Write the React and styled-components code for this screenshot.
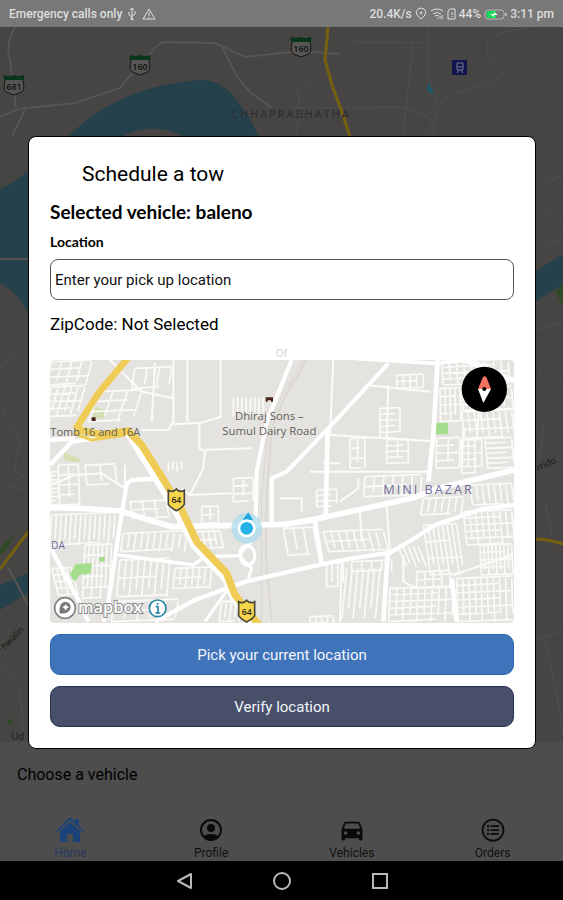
import React from 'react';
import styled, { createGlobalStyle } from 'styled-components';
import { MdDirectionsCar } from 'react-icons/md';
import { IoListCircleOutline } from 'react-icons/io5';

// parallel lanes inside a block: [x, y, width, height, columns, rows, skew]
const lanes = ([x, y, w, h, cols, rows, skew = 0]) => {
    let d = '';
    for (let i = 0; i <= cols; i++) {
        const px = x + (w * i) / (cols || 1);
        const cut = i % 2 ? h * 0.8 : h;
        if (cols) d += `M${px} ${y}L${px + skew * (cut / h)} ${y + cut}`;
    }
    for (let j = 0; j <= rows; j++) {
        const py = y + (h * j) / (rows || 1);
        const sx = (skew * j) / (rows || 1);
        if (rows) d += `M${x + sx} ${py}l${j % 2 ? w * 0.75 : w} ${-w * 0.04}`;
    }
    return d;
};

const westBlocks = [
    [20, 20, 120, 70, 4, 3, -18],
    [20, 95, 100, 90, 5, 4, -26],
    [160, 110, 130, 90, 3, 3, -30],
    [270, 40, 110, 60, 3, 1, -10],
    [40, 330, 60, 120, 2, 4, 4],
    [120, 330, 90, 60, 2, 1, 6],
    [18, 350, 22, 100, 1, 8, 0],
    [20, 480, 190, 90, 13, 1, -6],
    [120, 570, 80, 160, 6, 5, -8],
    [20, 640, 60, 80, 4, 4, 20],
    [235, 535, 210, 55, 11, 1, -8],
    [225, 615, 150, 110, 8, 2, -10],
    [390, 640, 110, 60, 6, 2, -6],
    [255, 440, 110, 50, 3, 2, 8],
    [455, 530, 70, 50, 4, 2, 10],
    [565, 125, 90, 60, 7, 0, 0],
    [565, 370, 60, 70, 2, 3, 0],
    [370, 320, 40, 30, 3, 0, 0],
    [470, 455, 50, 50, 2, 2, 0],
    [210, 740, 190, 60, 5, 2, -12],
    [530, 740, 60, 60, 4, 1, -8],
];

const eastBlocks = [
    [350, 60, 80, 40, 4, 2, 0],
    [485, 20, 200, 70, 9, 4, 4],
    [480, 100, 60, 100, 4, 4, 2],
    [545, 100, 150, 66, 6, 4, 4],
    [545, 170, 150, 80, 8, 3, 10],
    [470, 250, 70, 90, 2, 4, -2],
    [545, 255, 60, 100, 3, 5, 0],
    [615, 250, 80, 90, 1, 6, 8],
    [300, 160, 60, 90, 1, 5, 0],
    [320, 255, 65, 70, 2, 4, 0],
    [210, 250, 45, 90, 2, 3, 0],
    [255, 365, 170, 60, 6, 2, -4],
    [110, 405, 60, 50, 1, 3, 0],
    [430, 430, 120, 50, 6, 1, -8],
    [570, 390, 125, 60, 7, 1, 8],
    [130, 530, 180, 60, 8, 2, 16],
    [10, 520, 90, 80, 3, 1, 14],
    [355, 575, 60, 60, 4, 0, 24],
    [430, 510, 100, 150, 7, 3, 22],
    [550, 470, 145, 100, 8, 5, 10],
    [600, 570, 95, 90, 8, 4, 4],
    [140, 625, 50, 70, 3, 1, 0],
    [215, 620, 120, 30, 4, 1, 0],
    [200, 640, 100, 150, 6, 0, -14],
    [410, 650, 100, 50, 4, 2, 0],
    [330, 700, 190, 100, 9, 5, -4],
    [530, 670, 165, 130, 9, 6, 4],
    [90, 785, 70, 20, 4, 1, 0],
];

const GlobalStyle = createGlobalStyle`
    * {
        box-sizing: border-box;
    }

    body {
        margin: 0;
        background: #000;
        font-family: Roboto, "Liberation Sans", sans-serif;
    }

    button,
    input {
        font-family: inherit;
    }
`;

const Highway = ({ x, y }) => (
    <g transform={`translate(${x} ${y})`}>
        <path d="M-24-28Q-10-20 0-32Q10-20 24-28V14Q18 24 0 33Q-18 24-24 14Z" fill="#f5d64a" stroke="#4a483a" strokeWidth="5" />
        <MapText x="0" y="11" $size={26} $weight={600} textAnchor="middle" fill="#222">64</MapText>
    </g>
);

const Route = ({ x, y, label }) => (
    <g transform={`translate(${x} ${y})`}>
        <path d="M-10-9Q-5-7 0-9Q5-7 10-9L9-4Q12 7 5 8L0 10L-5 8Q-12 7-9-4Z" fill="#575654" stroke="#151515" strokeWidth="1" />
        <path d="M-10-10Q-5-8 0-10Q5-8 10-10V-5H-10Z" fill="#07351b" />
        <MapText x="0" y="5" $size={9} $weight={600} textAnchor="middle" fill="#111">{label}</MapText>
    </g>
);

const CityMap = () => (
    <Backdrop viewBox="0 27 563 715" preserveAspectRatio="xMidYMid slice" aria-hidden="true">
        <rect y="27" width="563" height="715" fill="#474543" />
        <path d="M0 189Q16 182 28 171Q60 145 68 137Q100 104 145 90Q180 80 205 80Q218 81 232 94L250 118L260 140L190 140Q155 117 115 140Q60 190 50 240L28 314Q18 292 0 283Z" fill="#24414c" />
        <path d="M0 585L28 573V593L0 610ZM533 273L563 254V284L533 303Z" fill="#24414c" />
        <path d="M428 82L433 91L433 95L427 90Z" fill="#1d5a66" />
        <path d="M555 292L563 284V305ZM0 548L12 536L10 544L0 556ZM7 722l5-4v7Z" fill="#2e4a25" />
        <g fill="none" stroke="#565553" strokeWidth="2">
            <path d="M15 27Q5 45 10 60L16 107M0 117L18 109L75 103L120 88L135 70L155 48L162 42L215 43L245 57L300 51L340 54" />
            <path d="M222 47L238 78L250 92L272 108M25 110L15 130L12 137M0 259H28M8 567L28 605" />
        </g>
        <g fill="none" stroke="#514f4e">
            <path d="M330 60L355 42L428 43M413 43L403 135M428 27V78L437 95L435 115L428 135M442 100L465 90L495 82L505 70L487 54V42L500 33L530 27" />
            <path d="M295 137L300 118L298 90L311 80L325 60M290 108L404 107L425 115L435 122M442 100L432 137" />
            <path d="M0 370L18 345L28 340M0 405L20 440L14 470L28 480M0 500L12 485L28 492M0 660L20 690L24 742M536 160H563M540 185L563 175M540 205L563 222M537 250L563 238M537 330L563 322M538 370L550 388L563 380M544 420L540 460M545 500L552 535M537 640L563 630M545 640L556 690L563 735M537 680H563" />
        </g>
        <path d="M328 27L325 60L332 85L342 112L351 140M0 569L28 532M535 539L548 540L563 544" fill="none" stroke="#75600f" strokeWidth="3" />
        <Route x={14} y={85} label="681" />
        <Route x={140} y={65} label="160" />
        <Route x={301} y={47} label="160" />
        <rect x="452" y="60" width="15" height="15" fill="#12154b" />
        <path d="M457 63H463V70H457ZM457 67H463M457 73L459 70M463 73L461 70" fill="none" stroke="#777991" />
        <MapText x="231" y="118" $size={11} $spacing={2} fill="#2a2932">CHHAPRABHATHA</MapText>
        <MapText x="0" y="0" $size={9} fill="#151515" transform="translate(5 650) rotate(-46)">hwalin</MapText>
        <MapText x="11" y="740" $size={10} fill="#1f1e22">Ud</MapText>
        <MapText x="0" y="0" $size={9} fill="#151515" transform="translate(538 471) rotate(-25)">rrido</MapText>
    </Backdrop>
);

const PickupMap = () => (
    <MapImage viewBox="15 15 1392 789" preserveAspectRatio="xMidYMid slice" role="img" aria-label="Pick up map">
        <rect x="0" y="0" width="1440" height="830" fill="#e5e3df" />
        <path d="M150 155L182 165L178 190L145 188ZM55 290L105 312L110 322L60 318Z" fill="#d3dfb0" />
        <g fill="none" stroke="#fbfaf7" strokeWidth="5">
            <path d={westBlocks.map(lanes).join('')} />
            <path transform="translate(705 0)" d={eastBlocks.map(lanes).join('')} />
        </g>
        <path d="M92 628L140 624L138 655L104 660L88 680L75 658ZM163 607l16-2v14l-16 2Z" fill="#a4de8d" />
        <path d="M1173 203H1209V238H1173Z" fill="#a4de8d" />
        <g fill="none" stroke="#fcfbf9" strokeWidth="6">
            <path d="M385 15V200L370 225H290M427 15V200M527 15V185L470 203L385 208M463 203V280L480 290L475 340L435 420L410 400M480 284L620 280M240 395V330M195 15L290 110L385 130M330 25L320 200M430 420L560 415M15 390L90 360L170 355L240 400" />
            <path transform="translate(705 0)" d="M160 15L150 240L450 258M90 350H450M255 90L450 110M325 90L320 250M0 430H65V470M180 325L130 325M235 370V400L180 440M320 450L330 590M240 470L245 560M185 620L180 800M370 600V680L410 700M520 660L695 600M550 220L545 350M610 20L590 250" />
        </g>
        <g fill="none" stroke="#d9d6cf">
            <path d="M785 15L722 120L680 220L665 420L662 600L680 800" strokeWidth="5" />
            <path d="M775 15L712 120L670 220L650 420L650 800" strokeWidth="3" />
        </g>
        <g fill="none" stroke="#fff" strokeLinejoin="round">
            <path d="M15 458L110 460L225 468L380 515L720 508L810 493L1100 430L1180 400L1407 345" strokeWidth="17" />
            <path d="M350 370L262 375Q245 380 243 400L228 490L190 740L175 800" strokeWidth="13" />
            <path d="M220 600L445 630L480 605L590 602" strokeWidth="10" />
            <path d="M15 255L90 250M15 330L80 260L160 250M15 575L100 735L130 800" strokeWidth="13" />
            <path d="M330 800L450 735L600 680L830 628L920 610L1035 593L1100 555L1170 510L1310 462L1407 450" strokeWidth="13" />
            <path d="M740 15L665 200L635 350L632 500M680 508V370L725 350L855 215L1030 25" strokeWidth="12" />
            <path d="M848 220L842 480M810 500L830 625M1178 15L1165 240L1150 380M1028 595L1015 800M1220 670L1235 800" strokeWidth="14" />
            <path d="M930 10L1170 25L1270 15L1407 75M1255 15L1407 80" strokeWidth="11" />
            <path d="M620 560L590 590Q580 620 605 632Q630 625 630 600Q625 570 600 573Q575 585 590 610L620 640L610 670M550 700L480 800" strokeWidth="9" />
            <path d="M250 230L380 440L455 575L545 670L570 730L625 800" strokeWidth="28" />
        </g>
        <g fill="none" stroke="#efcc55" strokeLinejoin="round">
            <path d="M252 5L160 115L92 222" strokeWidth="20" />
            <path d="M92 222L170 240L250 228L290 270L350 365L410 465L455 560L545 655L570 720L650 820" strokeWidth="22" />
            <path d="M85 235L140 255L240 240" strokeWidth="9" />
        </g>
        <Highway x={394} y={434} />
        <Highway x={605} y={768} />
        <path d="M140 187h12v11h-12ZM662 127h22v13h-6v-4h-10v4h-6Z" fill="#4b2618" />
        <MapText x="16" y="243" $size={33} fill="#625e5b">Tomb 16 and 16A</MapText>
        <MapText x="673" y="195" $size={34} textAnchor="middle" fill="#625e5b">Dhiraj Sons –</MapText>
        <MapText x="673" y="241" $size={34} textAnchor="middle" fill="#625e5b">Sumul Dairy Road</MapText>
        <MapText x="1015" y="417" $size={38} $spacing={6} fill="#6d6e9c">MINI BAZAR</MapText>
        <MapText x="18" y="581" $size={30} $spacing={1} fill="#6d6e9c">DA</MapText>
        <circle cx="605" cy="520" r="46" fill="#a9dcec" opacity="0.75" />
        <path d="M593 495L610 472L624 495Z" fill="#22a8dc" />
        <circle cx="605" cy="520" r="27" fill="#fff" />
        <circle cx="605" cy="520" r="19" fill="#24b1e6" />
        <circle cx="60" cy="759" r="31" fill="#fff" stroke="#858585" strokeWidth="5" />
        <path d="M44 775Q40 744 59 740Q78 741 77 758Q73 778 44 775Z" fill="#777" />
        <path d="M62 747l4 7 7 2-7 4-4 7-4-7-7-4 7-2Z" fill="#fff" />
        <MapText x="99" y="773" $size={49} $weight={600} fill="#fff" stroke="#8c8c8c" strokeWidth="6" paintOrder="stroke">mapbox</MapText>
        <circle cx="338" cy="760" r="25" fill="#fff" stroke="#2687a8" strokeWidth="5" />
        <path d="M332 755H339V773M331 774H346M338 744V749" fill="none" stroke="#2687a8" strokeWidth="5" />
        <circle cx="1318" cy="103" r="68" fill="#000" />
        <path d="M1299 102L1313 68Q1318 60 1325 68L1338 102Z" fill="#f27360" />
        <path d="M1299 102L1315 144L1338 102Z" fill="#fff" />
        <circle cx="1318" cy="102" r="6" fill="#000" />
    </MapImage>
);

const HomeIcon = () => (
    <svg width="28" height="28" viewBox="0 0 28 28">
        <path d="M14 1L19 6V3H23V10L28 15L27 16L14 4L1 16L0 15Z" fill="currentColor" />
        <path d="M14 6L24 15V26H17V18H11V26H4V15Z" fill="currentColor" />
    </svg>
);

const ProfileIcon = () => (
    <svg width="28" height="28" viewBox="0 0 28 28">
        <circle cx="14" cy="14" r="10" fill="none" stroke="currentColor" strokeWidth="2" />
        <circle cx="14" cy="12" r="4" fill="currentColor" />
        <path d="M7 20Q9 18 14 18Q19 18 21 20Q18 24 14 24Q10 24 7 20Z" fill="currentColor" />
    </svg>
);

const tabs = [
    { name: 'Home', icon: <HomeIcon />, active: true },
    { name: 'Profile', icon: <ProfileIcon /> },
    { name: 'Vehicles', icon: <MdDirectionsCar /> },
    { name: 'Orders', icon: <IoListCircleOutline /> },
];

const App = () => {
    return (
        <Screen>
            <GlobalStyle />
            <StatusBar>
                <StatusGroup>
                    <span>Emergency calls only</span>
                    <svg width="10" height="14" viewBox="0 0 10 14" fill="none" stroke="currentColor">
                        <path d="M5 1V12M2 5V8L5 10M8 4V7L5 9M3 3L5 1L7 3" />
                        <circle cx="5" cy="12" r="1" fill="currentColor" />
                    </svg>
                    <svg width="14" height="14" viewBox="0 0 14 14" fill="none" stroke="currentColor" strokeLinejoin="round">
                        <path d="M7 2L13 12H1ZM7 5V9M7 10V11" />
                    </svg>
                </StatusGroup>
                <StatusGroup $tight>
                    <span>20.4K/s</span>
                    <svg width="12" height="14" viewBox="0 0 12 14" fill="none" stroke="currentColor">
                        <path d="M6 12L2 8Q0 4 3 2Q6 0 9 2Q12 4 10 8Z" />
                        <circle cx="6" cy="6" r="1" />
                    </svg>
                    <svg width="14" height="14" viewBox="0 0 14 14" fill="none" stroke="currentColor">
                        <path d="M1 4Q7 0 13 4M3 7Q7 4 11 7M5 9Q7 8 9 9M7 11L8 12M10 9V12M12 8V12" />
                    </svg>
                    <svg width="9" height="14" viewBox="0 0 9 14" fill="none" stroke="currentColor">
                        <path d="M3 2H8V12H1V4ZM5 5V8M5 9V10" />
                    </svg>
                    <span>44%</span>
                    <svg width="23" height="14" viewBox="0 0 23 14">
                        <rect x="1" y="3" width="19" height="9" rx="3" fill="none" stroke="#b5b5b5" />
                        <path d="M3 4H12V11H3Q2 7 3 4Z" fill="#12dc57" />
                        <path d="M6 7H10V5L14 8H10V10Z" fill="#fff" />
                        <path d="M22 6V9" stroke="#b5b5b5" strokeWidth="2" />
                    </svg>
                    <span>3:11 pm</span>
                </StatusGroup>
            </StatusBar>

            <Content>
                <MapArea>
                    <CityMap />
                </MapArea>
                <VehiclePanel>Choose a vehicle</VehiclePanel>
                <TabBar>
                    {tabs.map((tab) => (
                        <Tab key={tab.name} href="#" $active={tab.active}>
                            {tab.icon}
                            <span>{tab.name}</span>
                        </Tab>
                    ))}
                </TabBar>

                <Overlay>
                    <Modal role="dialog" aria-labelledby="tow-title">
                        <Title id="tow-title">Schedule a tow</Title>
                        <Vehicle>Selected vehicle: baleno</Vehicle>
                        <Label htmlFor="pickup">Location</Label>
                        <LocationInput id="pickup" type="text" placeholder="Enter your pick up location" />
                        <ZipCode>ZipCode: Not Selected</ZipCode>
                        <Or>or</Or>
                        <PickupMap />
                        <ActionButton type="button" $bg="#3f73ba" $edge="#2867b0">Pick your current location</ActionButton>
                        <ActionButton type="button" $bg="#485069" $edge="#243153">Verify location</ActionButton>
                    </Modal>
                </Overlay>
            </Content>

            <SystemNav>
                <NavButton type="button" aria-label="Back">
                    <svg width="20" height="20" viewBox="0 0 20 20" fill="none" stroke="currentColor" strokeWidth="2" strokeLinejoin="round">
                        <path d="M17 3V17L4 10Z" />
                    </svg>
                </NavButton>
                <NavButton type="button" aria-label="Home screen">
                    <svg width="20" height="20" viewBox="0 0 20 20" fill="none" stroke="currentColor" strokeWidth="2">
                        <circle cx="10" cy="10" r="8" />
                    </svg>
                </NavButton>
                <NavButton type="button" aria-label="Recent apps">
                    <svg width="20" height="20" viewBox="0 0 20 20" fill="none" stroke="currentColor" strokeWidth="2">
                        <rect x="3" y="3" width="14" height="14" />
                    </svg>
                </NavButton>
            </SystemNav>
        </Screen>
    );
}

export default App;

const Screen = styled.div`
    min-height: 100vh;
    display: flex;
    flex-direction: column;
    color: #000;
`;

const StatusBar = styled.header`
    display: flex;
    align-items: center;
    justify-content: space-between;
    height: 27px;
    padding: 0 9px;
    background: #787878;
    color: #dedede;
    font-size: 12px;
    font-weight: 500;
    white-space: nowrap;
`;

const StatusGroup = styled.div`
    display: flex;
    align-items: center;
    gap: ${({ $tight }) => ($tight ? '3px' : '5px')};
`;

const Content = styled.main`
    position: relative;
    flex: 1;
    display: flex;
    flex-direction: column;
    background: #4d4d4d;
`;

const MapArea = styled.div`
    flex: 1;
    display: grid;
    min-height: 0;
    background: #474543;
`;

const Backdrop = styled.svg`
    width: 100%;
    height: 100%;
    display: block;
`;

const MapText = styled.text`
    font-family: "Open Sans", "Noto Sans", sans-serif;
    font-size: ${({ $size }) => $size}px;
    font-weight: ${({ $weight }) => $weight || 400};
    letter-spacing: ${({ $spacing }) => $spacing || 0}px;
`;

const VehiclePanel = styled.section`
    height: 63px;
    padding: 0 17px;
    font-size: 16px;
    line-height: 66px;
`;

const TabBar = styled.nav`
    display: grid;
    grid-template-columns: repeat(4, 1fr);
    height: 56px;
    border-top: 1px solid #494949;
`;

const Tab = styled.a`
    display: flex;
    flex-direction: column;
    align-items: center;
    color: ${({ $active }) => ($active ? '#1c427a' : '#0a0a0a')};
    text-decoration: none;
    font-size: 12px;
    line-height: 14px;

    svg {
        flex: none;
        margin-top: 10px;
        width: 28px;
        height: 28px;
    }

    span {
        margin-top: 2px;
        color: ${({ $active }) => ($active ? '#27395c' : '#111')};
    }
`;

const Overlay = styled.div`
    position: absolute;
    inset: 0;
    display: flex;
    align-items: center;
    padding: 0 27px 3px 28px;
`;

const Modal = styled.section`
    flex: 1;
    display: flex;
    flex-direction: column;
    padding: 24px 21px 21px;
    background: #fff;
    border: 1px solid #000;
    border-radius: 8px;
`;

const Title = styled.h1`
    margin: 0 0 12px 32px;
    font-size: 21px;
    font-weight: 400;
    line-height: 26px;
`;

const Vehicle = styled.h2`
    margin: 0;
    font-family: Lato, sans-serif;
    font-size: 19px;
    font-weight: 700;
    line-height: 26px;
`;

const Label = styled.label`
    margin-top: 8px;
    font-family: Lato, sans-serif;
    font-size: 14px;
    font-weight: 700;
    line-height: 18px;
`;

const LocationInput = styled.input`
    width: 100%;
    height: 41px;
    margin-top: 8px;
    padding: 0 4px;
    border: 1px solid #555;
    border-radius: 8px;
    background: #fff;
    font-size: 15px;

    &::placeholder {
        color: #111;
        opacity: 1;
    }
`;

const ZipCode = styled.p`
    margin: 12px 0 0;
    font-size: 17px;
    line-height: 24px;
`;

const Or = styled.p`
    margin: 8px 0 0;
    color: #dcdcdc;
    font-size: 14px;
    line-height: 16px;
    text-align: center;
`;

const MapImage = styled.svg`
    display: block;
    width: 100%;
    height: 263px;
    border-radius: 4px;
`;

const ActionButton = styled.button`
    height: 41px;
    margin-top: 11px;
    border: 1px solid ${({ $edge }) => $edge};
    border-radius: 10px;
    background: ${({ $bg }) => $bg};
    color: #f2f5fa;
    font-size: 15px;
`;

const SystemNav = styled.footer`
    display: flex;
    align-items: center;
    justify-content: center;
    gap: 78px;
    height: 39px;
    background: #000;
`;

const NavButton = styled.button`
    display: flex;
    padding: 0;
    border: none;
    background: none;
    color: #b9b9b9;
`;
